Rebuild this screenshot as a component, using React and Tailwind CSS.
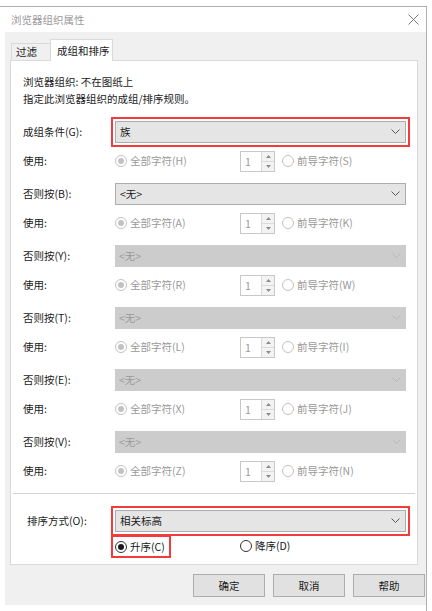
import React from "react";

const groups = [
  { label: "成组条件(G):", value: "族", all: "全部字符(H)", lead: "前导字符(S)", highlight: true },
  { label: "否则按(B):", value: "<无>", all: "全部字符(A)", lead: "前导字符(K)" },
  { label: "否则按(Y):", value: "<无>", disabled: true, all: "全部字符(R)", lead: "前导字符(W)" },
  { label: "否则按(T):", value: "<无>", disabled: true, all: "全部字符(L)", lead: "前导字符(I)" },
  { label: "否则按(E):", value: "<无>", disabled: true, all: "全部字符(X)", lead: "前导字符(J)" },
  { label: "否则按(V):", value: "<无>", disabled: true, all: "全部字符(Z)", lead: "前导字符(N)" },
];

function Chevron({ disabled }) {
  return (
    <svg width="9" height="5" viewBox="0 0 9 5">
      <path d="M0.5 0.5 L4.5 4.5 L8.5 0.5" fill="none" stroke={disabled ? "#b8b8b8" : "#5a5a5a"} strokeWidth="1" />
    </svg>
  );
}

function Select({ value, disabled, highlight }) {
  return (
    <div
      className={`flex h-[22px] w-[291px] items-center justify-between pl-[4px] pr-[5px] ${
        disabled ? "bg-[#cccccc] text-[#9a9a9a]" : "border border-[#adadad] bg-[#e5e5e5] text-[#1a1a1a]"
      } ${highlight ? "outline-2 outline-[#f23c3c] outline-offset-[2px]" : ""}`}
    >
      <span>{value}</span>
      <Chevron disabled={disabled} />
    </div>
  );
}

function Radio({ checked, disabled }) {
  return (
    <span
      className={`flex h-[12px] w-[12px] shrink-0 items-center justify-center rounded-full border bg-white ${
        disabled ? "border-[#c2c2c2]" : "border-[#333333]"
      }`}
    >
      {checked && <span className={`h-[6px] w-[6px] rounded-full ${disabled ? "bg-[#c2c2c2]" : "bg-[#1a1a1a]"}`} />}
    </span>
  );
}

function Spinner() {
  return (
    <div className="flex h-[21px] w-[35px] border border-[#c8c8c8] bg-white">
      <div className="flex-1 pl-[4px] leading-[19px] text-[#9a9a9a]">1</div>
      <div className="flex w-[13px] flex-col border-l border-[#dadada] bg-[#f3f3f3]">
        <div className="flex flex-1 items-center justify-center border-b border-[#dadada]">
          <svg width="5" height="3" viewBox="0 0 5 3">
            <path d="M0 3 L2.5 0 L5 3 Z" fill="#8a8a8a" />
          </svg>
        </div>
        <div className="flex flex-1 items-center justify-center">
          <svg width="5" height="3" viewBox="0 0 5 3">
            <path d="M0 0 L2.5 3 L5 0 Z" fill="#8a8a8a" />
          </svg>
        </div>
      </div>
    </div>
  );
}

export default function App() {
  return (
    <div className="h-[611px] w-[432px] overflow-hidden bg-white text-[10.5px] text-[#1a1a1a] font-['Noto_Sans_CJK_SC',sans-serif]">
      <div className="mt-[6px] h-[605px] w-[427px] border-t border-r border-[#b0b0b0]">
        {/* title bar */}
        <div className="flex h-[25px] items-center justify-between pl-[11px] pr-[7px]">
          <span className="text-[#9a9a9a]">浏览器组织属性</span>
          <svg width="11" height="11" viewBox="0 0 11 11">
            <path d="M0.5 0.5 L10.5 10.5 M10.5 0.5 L0.5 10.5" stroke="#7a7a7a" strokeWidth="1" />
          </svg>
        </div>

        <div className="ml-[5px] flex h-[573px] w-[421px] flex-col bg-[#f0f0f0]">
          {/* tabs */}
          <div className="mt-[7px] ml-[6px] flex h-[21px] items-end">
            <div className="flex h-[17px] w-[39px] items-center border-t border-l border-[#d9d9d9] pl-[4px]">过滤</div>
            <div className="relative z-10 -mb-px flex h-[22px] w-[63px] items-center border-x border-t border-[#d9d9d9] bg-white pl-[6px]">
              成组和排序
            </div>
          </div>

          {/* panel */}
          <div className="ml-[5px] flex h-[505px] w-[408px] flex-col border border-[#d9d9d9] bg-white pt-[12px]">
            <div className="pl-[12px] leading-[17px]">
              <div>浏览器组织: 不在图纸上</div>
              <div>指定此浏览器组织的成组/排序规则。</div>
            </div>

            <div className="mt-[10px] flex flex-col pl-[12px]">
              {groups.map((g, i) => (
                <div key={i} className={i > 0 ? "mt-[3px]" : ""}>
                  <div className="flex h-[29px] items-center">
                    <span className="w-[92px]">{g.label}</span>
                    <Select value={g.value} disabled={g.disabled} highlight={g.highlight} />
                  </div>
                  <div className="flex h-[30px] items-center">
                    <span className="w-[92px]">使用:</span>
                    <div className="flex w-[125px] items-center gap-[3px] text-[#9a9a9a]">
                      <Radio checked disabled />
                      <span>{g.all}</span>
                    </div>
                    <Spinner />
                    <div className="ml-[7px] flex items-center gap-[3px] text-[#9a9a9a]">
                      <Radio disabled />
                      <span>{g.lead}</span>
                    </div>
                  </div>
                </div>
              ))}
            </div>

            <div className="mx-[2px] mt-[7px] h-px bg-[#d2d2d2]" />

            <div className="mt-[12px] flex h-[29px] items-center pl-[16px]">
              <span className="w-[88px]">排序方式(O):</span>
              <Select value="相关标高" highlight />
            </div>
            <div className="mt-[1px] flex h-[20px] items-center pl-[104px]">
              <div className="w-[125px]">
                <span className="inline-flex items-center gap-[3px] pr-[2px] outline-2 outline-[#f23c3c] outline-offset-[2px]">
                  <Radio checked />
                  <span>升序(C)</span>
                </span>
              </div>
              <div className="flex items-center gap-[3px]">
                <Radio />
                <span>降序(D)</span>
              </div>
            </div>
          </div>

          {/* buttons */}
          <div className="mt-[9px] flex justify-end gap-[8px] pr-[1px]">
            {["确定", "取消", "帮助"].map((b) => (
              <div key={b} className="flex h-[23px] w-[72px] items-center justify-center border border-[#adadad] bg-[#e1e1e1]">
                {b}
              </div>
            ))}
          </div>
        </div>
      </div>
    </div>
  );
}
